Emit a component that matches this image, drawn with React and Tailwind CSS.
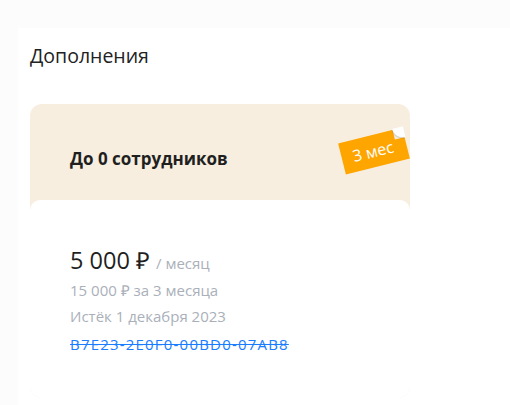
import React from 'react';

const Badge = ({ label }) => (
  <div className="absolute right-[3px] top-[31px] w-[66px] h-[32px] -rotate-[14deg]">
    <div className="relative w-full h-full bg-[#ffa500] flex items-center justify-center text-white text-[16px] leading-none pr-[2px]">
      {label}
      <span className="absolute -top-px -right-px w-[11px] h-[11px] bg-[#f7eedf]" />
      <span className="absolute -top-px -right-px w-[11px] h-[11px] bg-white rounded-bl-full shadow-[-1px_1px_1px_rgba(0,0,0,0.12)]" />
    </div>
  </div>
);

const AddonCard = ({ title, badge, price, period, total, expired, code }) => (
  <div className="relative w-[380px] rounded-[12px] bg-[#f7eedf] overflow-hidden">
    <div className="h-[96px] px-10 pt-[43px]">
      <span className="text-[17px] leading-6 font-bold text-[#1f1f1f]">{title}</span>
    </div>
    <Badge label={badge} />
    <div className="bg-white rounded-t-[10px] px-10 pt-[44px] pb-[40px]">
      <div className="flex items-baseline gap-[6px]">
        <span className="text-[23.5px] leading-8 text-[#1f1f1f]">{price}</span>
        <span className="text-[15px] text-[#aab0ba]">/ {period}</span>
      </div>
      <div className="text-[15px] leading-[26px] mt-[1px] text-[#aab0ba]">{total}</div>
      <div className="text-[15px] leading-[26px] text-[#aab0ba]">{expired}</div>
      <div className="text-[15px] leading-[28px] mt-[1px] tracking-[1.2px] text-[#1a7dff] line-through">{code}</div>
    </div>
  </div>
);

export default function App() {
  return (
    <div className="min-h-screen bg-[#fcfcfc] pt-[28px] pl-[18px] font-['Open_Sans',sans-serif]">
      <div className="bg-white min-h-[377px] px-3 pt-[16px]">
        <h2 className="text-[19.5px] leading-6 text-[#222]">Дополнения</h2>
        <div className="mt-[36px]">
          <AddonCard
            title="До 0 сотрудников"
            badge="3 мес"
            price="5 000 ₽"
            period="месяц"
            total="15 000 ₽ за 3 месяца"
            expired="Истёк 1 декабря 2023"
            code="B7E23-2E0F0-00BD0-07AB8"
          />
        </div>
      </div>
    </div>
  );
}
